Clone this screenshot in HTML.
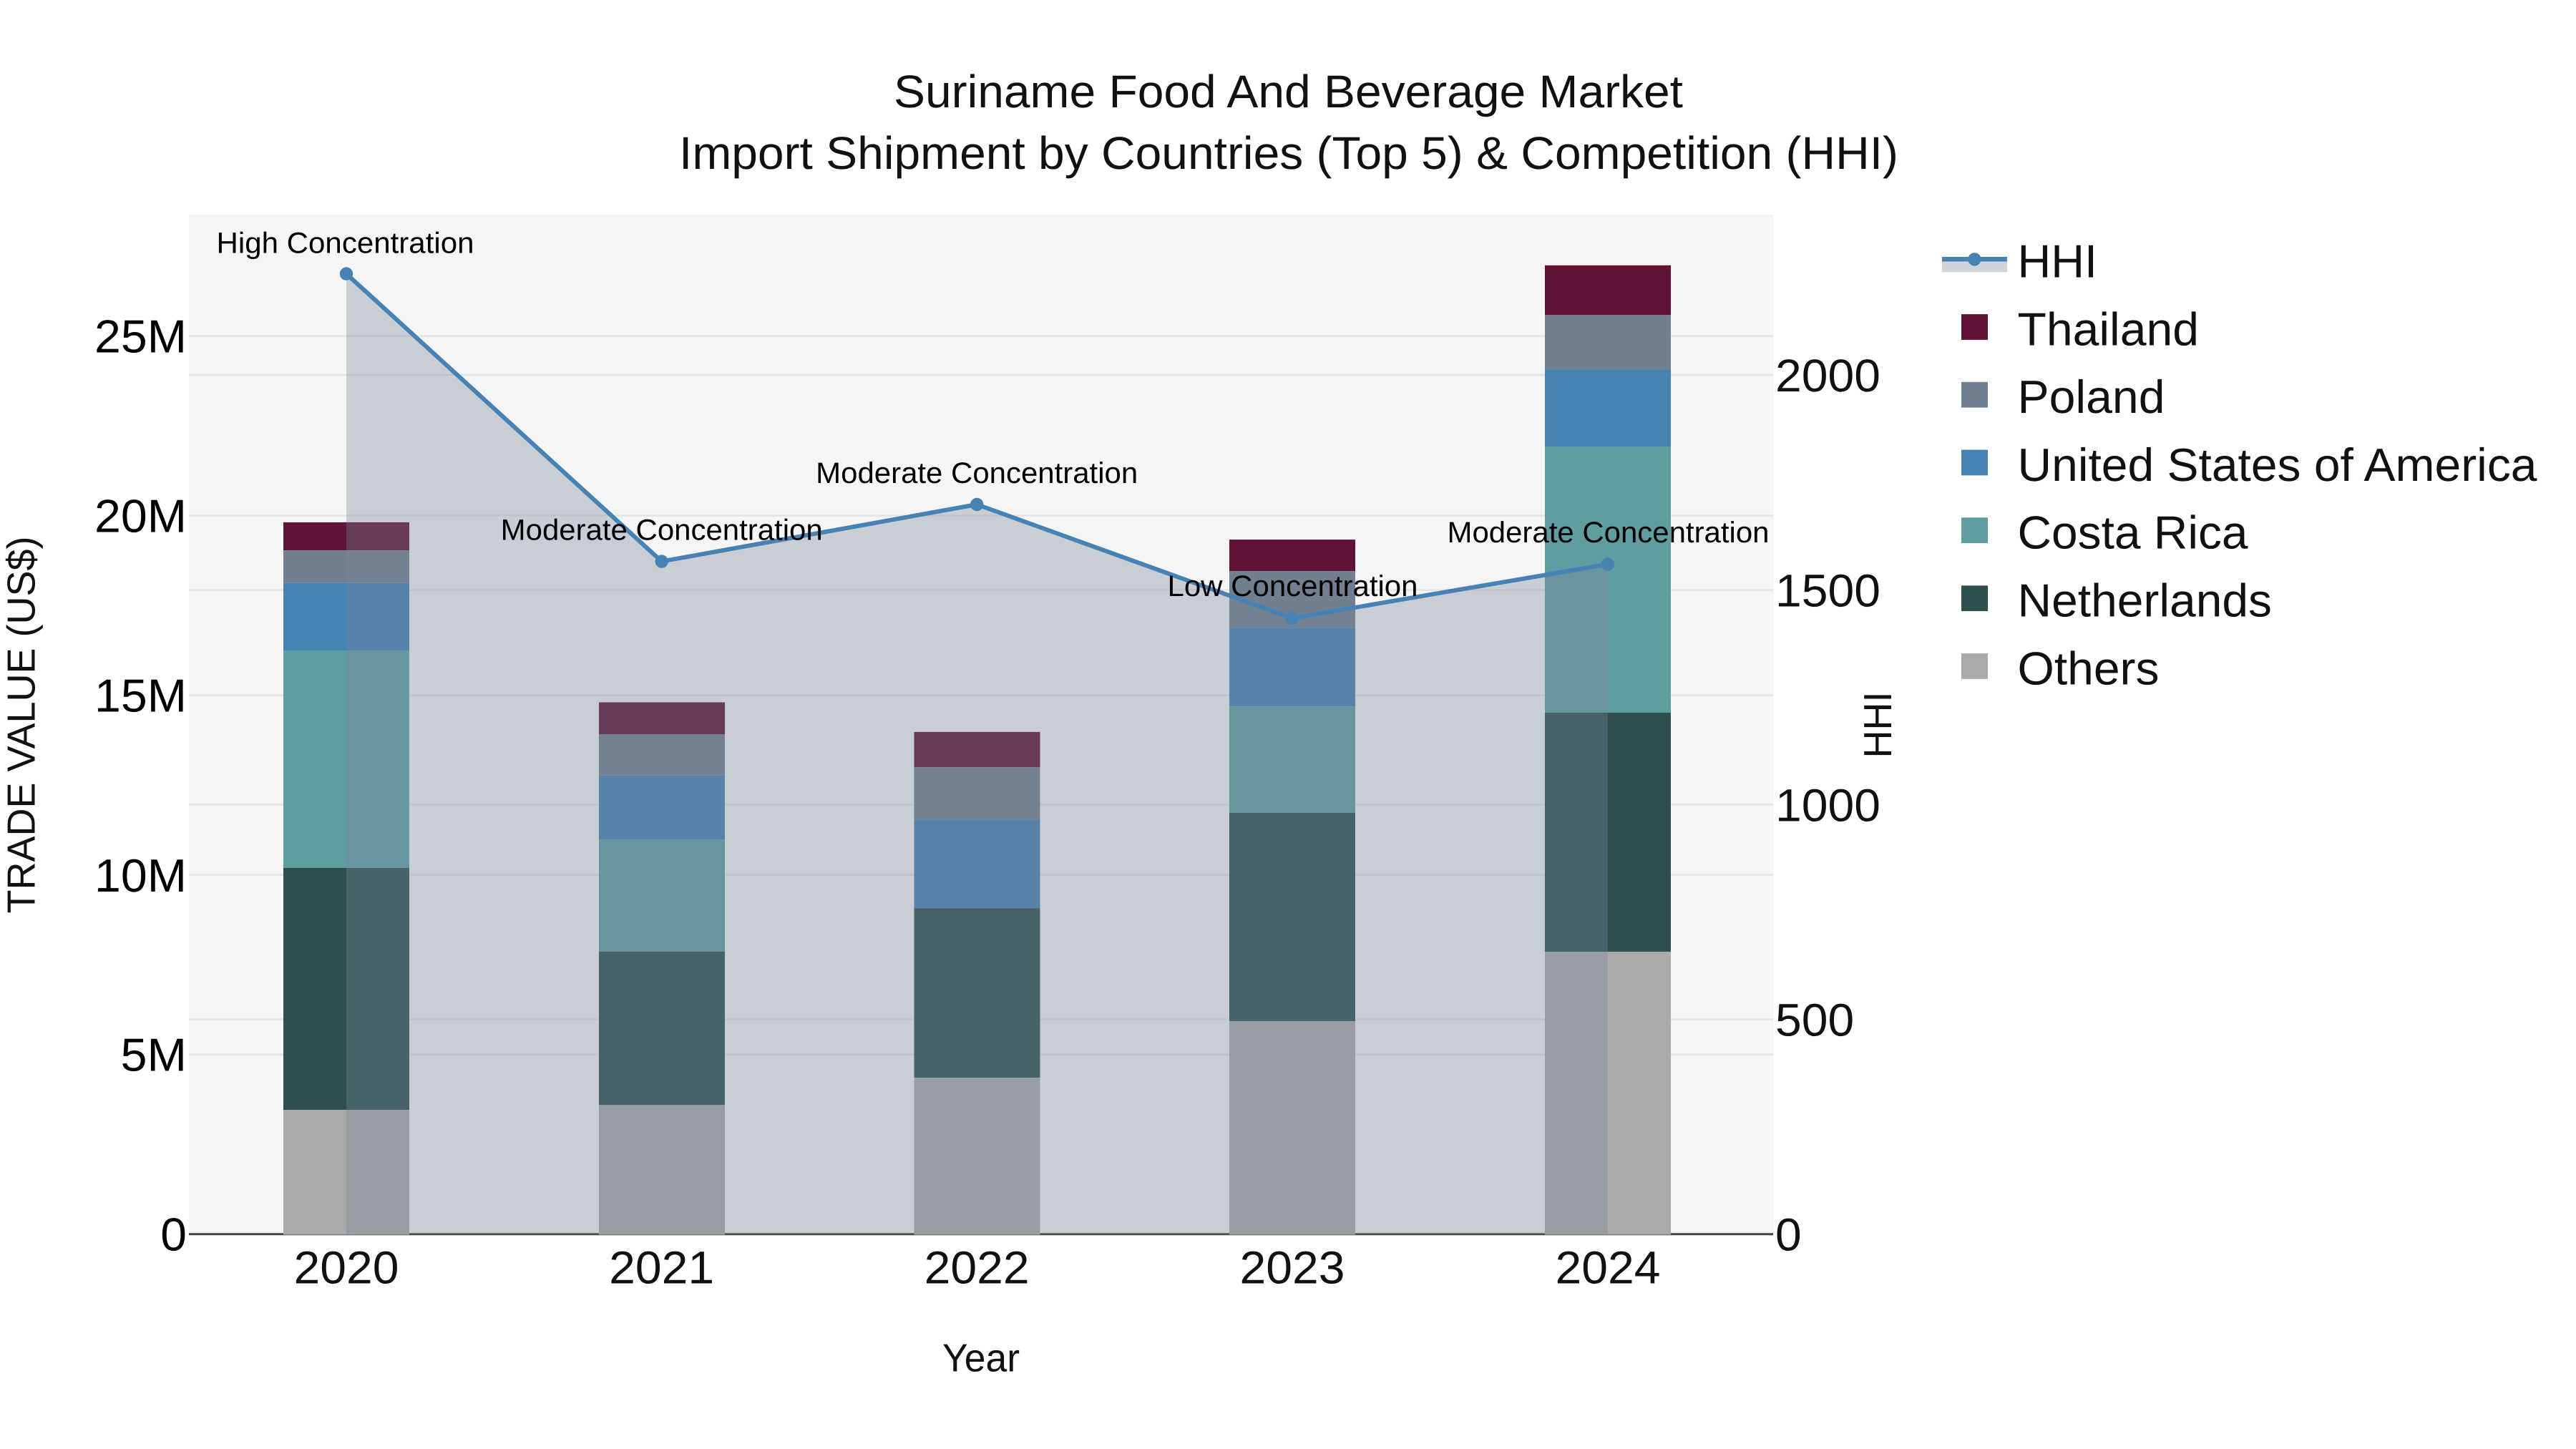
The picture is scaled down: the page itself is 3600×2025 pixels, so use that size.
<!DOCTYPE html>
<html lang="en">
<head>
<meta charset="utf-8">
<title>Suriname Food And Beverage Market</title>
<style>
html,body{margin:0;padding:0;background:#fff;width:3600px;height:2025px;overflow:hidden}
svg{display:block}
text{font-family:"Liberation Sans",Arial,sans-serif;text-rendering:geometricPrecision}
.t{font-size:64.3px;fill:#111}
.l{font-size:65px;fill:#111}
.k{font-size:65px;fill:#000}
.a{font-size:41.3px;fill:#000;text-anchor:middle}
.x{font-size:55px;fill:#111}
</style>
</head>
<body>
<svg width="3600" height="2025" viewBox="0 0 3600 2025" xmlns="http://www.w3.org/2000/svg">
<rect width="3600" height="2025" fill="#fff"/>
<rect x="264" y="300" width="2214" height="1425" fill="#f5f5f5"/>

<!-- gridlines -->
<g stroke="#e5e5e5" stroke-width="2.6">
<path d="M264 1473.7H2478M264 1222.6H2478M264 971.6H2478M264 720.5H2478M264 469.6H2478"/>
<path d="M264 1424.6H2478M264 1124.5H2478M264 824.5H2478M264 524H2478"/>
</g>
<path d="M264 1724.7H2478" stroke="#444" stroke-width="3"/>

<!-- bars 2020 -->
<g>
<rect x="396" y="729.9" width="176" height="39.3" fill="#601336"/>
<rect x="396" y="769.2" width="176" height="45.6" fill="#708090"/>
<rect x="396" y="814.8" width="176" height="94.6" fill="#4682b4"/>
<rect x="396" y="909.4" width="176" height="303.6" fill="#5f9ea0"/>
<rect x="396" y="1213" width="176" height="338.2" fill="#2f4f4f"/>
<rect x="396" y="1551.2" width="176" height="174.3" fill="#a9a9a9"/>
</g>
<!-- bars 2021 -->
<g>
<rect x="837" y="981.5" width="176" height="44.5" fill="#601336"/>
<rect x="837" y="1026" width="176" height="57.7" fill="#708090"/>
<rect x="837" y="1083.7" width="176" height="89.3" fill="#4682b4"/>
<rect x="837" y="1173" width="176" height="157" fill="#5f9ea0"/>
<rect x="837" y="1330" width="176" height="214.3" fill="#2f4f4f"/>
<rect x="837" y="1544.3" width="176" height="181.2" fill="#a9a9a9"/>
</g>
<!-- bars 2022 -->
<g>
<rect x="1277.5" y="1022.9" width="176" height="49.3" fill="#601336"/>
<rect x="1277.5" y="1072.2" width="176" height="73" fill="#708090"/>
<rect x="1277.5" y="1145.2" width="176" height="124" fill="#4682b4"/>
<rect x="1277.5" y="1269.2" width="176" height="237" fill="#2f4f4f"/>
<rect x="1277.5" y="1506.2" width="176" height="219.3" fill="#a9a9a9"/>
</g>
<!-- bars 2023 -->
<g>
<rect x="1718" y="754.1" width="176" height="44" fill="#601336"/>
<rect x="1718" y="798.1" width="176" height="79.2" fill="#708090"/>
<rect x="1718" y="877.3" width="176" height="109.9" fill="#4682b4"/>
<rect x="1718" y="987.2" width="176" height="148.8" fill="#5f9ea0"/>
<rect x="1718" y="1136" width="176" height="291" fill="#2f4f4f"/>
<rect x="1718" y="1427" width="176" height="298.5" fill="#a9a9a9"/>
</g>
<!-- bars 2024 -->
<g>
<rect x="2159" y="370.8" width="176" height="69.2" fill="#601336"/>
<rect x="2159" y="440" width="176" height="77" fill="#708090"/>
<rect x="2159" y="517" width="176" height="107" fill="#4682b4"/>
<rect x="2159" y="624" width="176" height="372" fill="#5f9ea0"/>
<rect x="2159" y="996" width="176" height="334.1" fill="#2f4f4f"/>
<rect x="2159" y="1330.1" width="176" height="395.4" fill="#a9a9a9"/>
</g>

<!-- HHI area -->
<path d="M484 382.6L924.7 784.6L1365.2 705L1806 864L2247 788.5V1724.7H484Z" fill="rgb(120,134,155)" fill-opacity="0.35"/>
<path d="M484 382.6L924.7 784.6L1365.2 705L1806 864L2247 788.5" fill="none" stroke="#4682b4" stroke-width="6" stroke-linejoin="round"/>
<g fill="#4682b4">
<circle cx="484" cy="382.6" r="9.2"/>
<circle cx="924.7" cy="784.6" r="9.2"/>
<circle cx="1365.2" cy="705" r="9.2"/>
<circle cx="1806" cy="864" r="9.2"/>
<circle cx="2247" cy="788.5" r="9.2"/>
</g>

<!-- title -->
<text class="t" x="1800.5" y="150" text-anchor="middle" textLength="1103" lengthAdjust="spacingAndGlyphs">Suriname Food And Beverage Market</text>
<text class="t" x="1801" y="236" text-anchor="middle" textLength="1704" lengthAdjust="spacingAndGlyphs">Import Shipment by Countries (Top 5) &amp; Competition (HHI)</text>

<!-- left ticks -->
<text class="k" x="261" y="492.5" text-anchor="end" textLength="129" lengthAdjust="spacingAndGlyphs">25M</text>
<text class="k" x="261" y="743.5" text-anchor="end" textLength="129" lengthAdjust="spacingAndGlyphs">20M</text>
<text class="k" x="261" y="994.5" text-anchor="end" textLength="129" lengthAdjust="spacingAndGlyphs">15M</text>
<text class="k" x="261" y="1245.8" text-anchor="end" textLength="129" lengthAdjust="spacingAndGlyphs">10M</text>
<text class="k" x="261" y="1496.5" text-anchor="end" textLength="92.5" lengthAdjust="spacingAndGlyphs">5M</text>
<text class="k" x="261" y="1747.5" text-anchor="end" textLength="36.7" lengthAdjust="spacingAndGlyphs">0</text>

<!-- right ticks -->
<text class="t" x="2481" y="547" textLength="147" lengthAdjust="spacingAndGlyphs">2000</text>
<text class="t" x="2481" y="847.5" textLength="147" lengthAdjust="spacingAndGlyphs">1500</text>
<text class="t" x="2481" y="1147.5" textLength="147" lengthAdjust="spacingAndGlyphs">1000</text>
<text class="t" x="2481" y="1447.5" textLength="110.2" lengthAdjust="spacingAndGlyphs">500</text>
<text class="t" x="2481" y="1747.5" textLength="36.7" lengthAdjust="spacingAndGlyphs">0</text>

<!-- x ticks -->
<text class="t" x="484" y="1793.5" text-anchor="middle" textLength="147" lengthAdjust="spacingAndGlyphs">2020</text>
<text class="t" x="924.7" y="1793.5" text-anchor="middle" textLength="147" lengthAdjust="spacingAndGlyphs">2021</text>
<text class="t" x="1365.2" y="1793.5" text-anchor="middle" textLength="147" lengthAdjust="spacingAndGlyphs">2022</text>
<text class="t" x="1806" y="1793.5" text-anchor="middle" textLength="147" lengthAdjust="spacingAndGlyphs">2023</text>
<text class="t" x="2247" y="1793.5" text-anchor="middle" textLength="147" lengthAdjust="spacingAndGlyphs">2024</text>

<!-- axis titles -->
<text class="x" x="1371" y="1916.7" text-anchor="middle" textLength="108" lengthAdjust="spacingAndGlyphs">Year</text>
<text class="x" transform="translate(48.3 1013) rotate(-90)" text-anchor="middle" textLength="527" lengthAdjust="spacingAndGlyphs">TRADE VALUE (US$)</text>
<text class="x" transform="translate(2643 1013) rotate(-90)" text-anchor="middle" textLength="93" lengthAdjust="spacingAndGlyphs">HHI</text>

<!-- annotations -->
<text class="a" x="482.5" y="353.6" textLength="360" lengthAdjust="spacingAndGlyphs">High Concentration</text>
<text class="a" x="924.7" y="754.5" textLength="450" lengthAdjust="spacingAndGlyphs">Moderate Concentration</text>
<text class="a" x="1365.2" y="675" textLength="450" lengthAdjust="spacingAndGlyphs">Moderate Concentration</text>
<text class="a" x="1806.5" y="833" textLength="350" lengthAdjust="spacingAndGlyphs">Low Concentration</text>
<text class="a" x="2247.5" y="758" textLength="450" lengthAdjust="spacingAndGlyphs">Moderate Concentration</text>

<!-- legend -->
<rect x="2714" y="362" width="91" height="18.3" fill="rgb(120,134,155)" fill-opacity="0.35"/>
<path d="M2714 362.3H2805" stroke="#4682b4" stroke-width="6.5"/>
<circle cx="2759.4" cy="362.4" r="9.2" fill="#4682b4"/>
<rect x="2741" y="439.1" width="37" height="35.8" fill="#601336"/>
<rect x="2741" y="533.8" width="37" height="35.8" fill="#708090"/>
<rect x="2741" y="628.6" width="37" height="35.8" fill="#4682b4"/>
<rect x="2741" y="723.3" width="37" height="35.8" fill="#5f9ea0"/>
<rect x="2741" y="818.3" width="37" height="35.8" fill="#2f4f4f"/>
<rect x="2741" y="913.1" width="37" height="35.8" fill="#a9a9a9"/>
<text class="l" x="2819.5" y="387.3" textLength="111.5" lengthAdjust="spacingAndGlyphs">HHI</text>
<text class="l" x="2819.5" y="482.3" textLength="253.5" lengthAdjust="spacingAndGlyphs">Thailand</text>
<text class="l" x="2819.5" y="577.1" textLength="206" lengthAdjust="spacingAndGlyphs">Poland</text>
<text class="l" x="2819.5" y="671.9" textLength="726" lengthAdjust="spacingAndGlyphs">United States of America</text>
<text class="l" x="2819.5" y="766.6" textLength="322" lengthAdjust="spacingAndGlyphs">Costa Rica</text>
<text class="l" x="2819.5" y="861.3" textLength="355.5" lengthAdjust="spacingAndGlyphs">Netherlands</text>
<text class="l" x="2819.5" y="956.5" textLength="198" lengthAdjust="spacingAndGlyphs">Others</text>
</svg>
</body>
</html>
